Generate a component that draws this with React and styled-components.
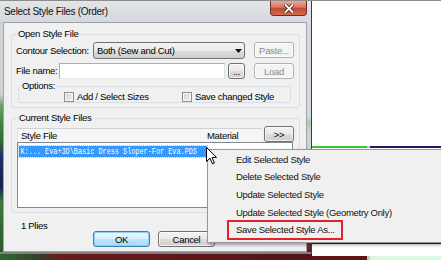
import React from "react";
import styled, { createGlobalStyle } from "styled-components";

const GlobalStyle = createGlobalStyle`
  html, body { margin: 0; padding: 0; background: #fff; overflow: hidden; }
  body { font-family: "Liberation Sans", Arial, sans-serif; }
`;

const Screen = styled.div`
  position: relative;
  width: 441px;
  height: 260px;
  box-sizing: border-box;
  border-top: 1px solid #8d8d8d;
  display: flex;
  overflow: hidden;
  font-family: "Liberation Sans", Arial, sans-serif;
  font-size: 9.5px;
  letter-spacing: -0.3px;
  color: #000;
`;

const LeftColumn = styled.div`
  width: 312px;
  display: flex;
  flex-direction: column;
`;

const Dialog = styled.div`
  height: 253px;
  display: flex;
  flex-direction: column;
  border-right: 1px solid #3d3d3d;
  background: #d6d9dd;
`;

const TitleBar = styled.div`
  height: 21px;
  flex: none;
  display: flex;
  align-items: flex-start;
  justify-content: space-between;
  background: linear-gradient(#e3e5e8, #d5d8dc);
`;

const TitleText = styled.div`
  padding: 5px 0 0 4px;
  font-size: 10px;
  line-height: 12px;
  color: #111;
`;

const CloseButton = styled.div`
  width: 37px;
  height: 15px;
  margin-right: 4px;
  box-sizing: border-box;
  display: flex;
  align-items: center;
  justify-content: center;
  border: 1px solid #6b2f29;
  border-top: none;
  border-radius: 0 0 4px 4px;
  background: linear-gradient(#e8a99b, #d87562 45%, #c24a33 52%, #d06b50);
`;

const Body = styled.div`
  height: 230px;
  display: flex;
`;

const FrameSide = styled.div`
  width: ${(p) => p.$w}px;
  flex: none;
  background: ${(p) => p.$bg};
`;

const BottomFrame = styled.div`
  height: 2px;
  background: #7d8186;
`;

const Client = styled.div`
  width: 304px;
  box-sizing: border-box;
  border: 1px solid #9ea4aa;
  background: #f0f0f0;
  display: flex;
  flex-direction: column;
`;

const DesktopStrip = styled.div`
  flex: 1;
  background: linear-gradient(90deg, #2e6b2e 0, #3b3b2a 40px, #6a1a1a 60px, #521414 100%);
`;

const Group = styled.fieldset`
  box-sizing: border-box;
  width: ${(p) => p.$w}px;
  margin: ${(p) => p.$m};
  padding: ${(p) => p.$pad};
  border: 1px solid #d5dfe5;
  border-radius: 3px;
  min-width: 0;
`;

const Legend = styled.legend`
  padding: 0 2px;
  line-height: 12px;
  font-size: 9.5px;
`;

const Row = styled.div`
  display: flex;
  align-items: flex-start;
  height: ${(p) => p.$h}px;
  margin-top: ${(p) => p.$mt || 0}px;
`;

const Label = styled.div`
  width: ${(p) => p.$w}px;
  flex: none;
  line-height: ${(p) => p.$lh || 17}px;
`;

const ComboBox = styled.div`
  width: 152px;
  height: 17px;
  box-sizing: border-box;
  display: flex;
  align-items: center;
  justify-content: space-between;
  padding: 0 2px 0 3px;
  border: 1px solid #707070;
  border-radius: 3px;
  background: linear-gradient(#f2f2f2 0%, #ebebeb 50%, #dddddd 51%, #cfcfcf 100%);
`;

const PushButton = styled.div`
  width: ${(p) => p.$w}px;
  height: 16px;
  margin-left: ${(p) => p.$ml || 0}px;
  flex: none;
  box-sizing: border-box;
  display: flex;
  align-items: center;
  justify-content: center;
  border-radius: 3px;
  border: 1px solid ${(p) => (p.$kind === "off" ? "#adb2b5" : p.$kind === "default" ? "#3c7fb1" : "#707070")};
  color: ${(p) => (p.$kind === "off" ? "#8a8a8a" : "#000")};
  background: ${(p) =>
    p.$kind === "off"
      ? "#f4f4f4"
      : p.$kind === "default"
      ? "linear-gradient(#eaf6fd 0%, #d9f0fc 50%, #bee6fd 51%, #a7d9f5 100%)"
      : "linear-gradient(#f2f2f2 0%, #ebebeb 50%, #dddddd 51%, #cfcfcf 100%)"};
  box-shadow: ${(p) => (p.$kind === "default" ? "inset 0 0 0 1px #8fd0f5" : "inset 0 0 0 1px rgba(255,255,255,0.7)")};
`;

const TextBox = styled.div`
  width: 166px;
  height: 16px;
  box-sizing: border-box;
  border: 1px solid #abadb3;
  border-bottom-color: #e3e9ef;
  border-right-color: #dbdfe6;
  background: #fff;
`;

const OptionsRow = styled.div`
  display: grid;
  grid-template-columns: 118px auto;
  align-items: center;
  height: 10px;
  padding-left: 44px;
`;

const CheckOption = styled.div`
  display: flex;
  align-items: center;
  gap: 3px;
  line-height: 10px;
`;

const CheckBox = styled.span`
  width: 10px;
  height: 10px;
  box-sizing: border-box;
  border: 1px solid #8e8f8f;
  background: linear-gradient(135deg, #cfcfcf, #f4f4f4);
  box-shadow: inset 0 0 0 1px #f5f5f5;
`;

const TopRow = styled.div`
  display: flex;
  align-items: flex-end;
  height: 16px;
`;

const HeaderBar = styled.div`
  width: 245px;
  height: 14px;
  box-sizing: border-box;
  display: flex;
  align-items: center;
  padding-left: 3px;
  border-top: 1px solid #cfd3d6;
  border-left: 1px solid #dfe3e6;
  background: #f6f6f6;
`;

const HeaderCell = styled.div`
  width: ${(p) => p.$w || "auto"};
  flex: none;
`;

const ListBox = styled.div`
  width: 276px;
  height: 66px;
  box-sizing: border-box;
  border: 1px solid #828790;
  background: #fff;
  padding: 3px 1px;
`;

const SelectedRow = styled.div`
  width: 188px;
  height: 11px;
  box-sizing: border-box;
  display: flex;
  align-items: center;
  background: #3399ff;
  outline: 1px dotted #f2b56a;
  color: #fff;
  overflow: visible;
`;

const MonoText = styled.span`
  display: inline-block;
  padding-left: 2px;
  font-family: "Liberation Mono", "Courier New", monospace;
  font-size: 9.5px;
  letter-spacing: 0;
  line-height: 11px;
  white-space: nowrap;
  transform: scaleX(0.72);
  transform-origin: left center;
`;

const Footer = styled.div`
  padding-left: 17px;
`;

const Plies = styled.div`
  margin-top: 7px;
  line-height: 11px;
`;

const ButtonRow = styled.div`
  display: flex;
  gap: 8px;
  padding-left: 72px;
`;

const Backdrop = styled.div`
  flex: 1;
  display: flex;
  flex-direction: column;
  background: #fff;
`;

const Strip = styled.div`
  height: ${(p) => p.$h}px;
  flex: none;
  display: flex;
  background: ${(p) => p.$bg || "#fff"};
`;

const Segment = styled.div`
  width: ${(p) => (p.$w ? `${p.$w}px` : "auto")};
  flex: ${(p) => (p.$w ? "none" : 1)};
  background: ${(p) => p.$bg};
`;

const ContextMenu = styled.div`
  position: absolute;
  left: 207px;
  top: 148px;
  width: 250px;
  height: 94px;
  box-sizing: border-box;
  padding-top: 1px;
  border: 1px solid #979797;
  background: #f0f0f0;
  box-shadow: 2px 2px 3px rgba(0, 0, 0, 0.35);
`;

const MenuItem = styled.div`
  height: 17.6px;
  display: flex;
  align-items: center;
  padding-left: 28px;
  color: #111;
`;

const MenuLabel = styled.span`
  line-height: 16px;
  ${(p) =>
    p.$marked &&
    `
    border: 2px solid #e4222a;
    padding: 0 6px 0 7px;
    margin-left: -9px;
  `}
`;

const Pointer = styled.svg`
  position: absolute;
  left: 206px;
  top: 146px;
`;

const menuItems = [
  "Edit Selected Style",
  "Delete Selected Style",
  "Update Selected Style",
  "Update Selected Style (Geometry Only)",
  "Save Selected Style As...",
];

const leftFrame =
  "linear-gradient(#cfd3d6 0, #cfd3d6 72px, #6f9c6a 84px, #3f8a3f 100px, #2f6a33 120px, #1e2c6c 135px, #172050 165px, #3d7a3a 180px, #2b5a2b 230px)";
const rightFrame =
  "linear-gradient(#d5d8dc 0, #d5d8dc 95px, #a6cfa0 100px, #d0d4d8 110px, #c8ccd0 205px, #7a3030 222px, #5a1a1a 230px)";

export default function App() {
  return (
    <>
      <GlobalStyle />
      <Screen>
        <LeftColumn>
          <Dialog>
            <TitleBar>
              <TitleText>Select Style Files (Order)</TitleText>
              <CloseButton>
                <svg width="10" height="9" viewBox="0 0 10 9">
                  <path d="M1.5 1 L8.5 8 M8.5 1 L1.5 8" stroke="#4a1e18" strokeWidth="3.4" strokeLinecap="square" />
                  <path d="M1.5 1 L8.5 8 M8.5 1 L1.5 8" stroke="#fff" strokeWidth="1.8" strokeLinecap="square" />
                </svg>
              </CloseButton>
            </TitleBar>
            <Body>
              <FrameSide $w={3} $bg={leftFrame} />
              <Client>
                <Group $w={289} $m="5px 0 0 7px" $pad="2px 4px 4px 4px">
                  <Legend>Open Style File</Legend>
                  <Row $h={17}>
                    <Label $w={77}>Contour Selection:</Label>
                    <ComboBox>
                      <span>Both (Sew and Cut)</span>
                      <svg width="7" height="4" viewBox="0 0 7 4">
                        <path d="M0 0 H7 L3.5 4 Z" fill="#111" />
                      </svg>
                    </ComboBox>
                    <PushButton $w={40} $ml={9} $kind="off">Paste...</PushButton>
                  </Row>
                  <Row $h={16} $mt={4}>
                    <Label $w={43} $lh={16}>File name:</Label>
                    <TextBox />
                    <PushButton $w={17} $ml={3}>...</PushButton>
                    <PushButton $w={40} $ml={9} $kind="off">Load</PushButton>
                  </Row>
                  <Group $w={273} $m="1px 0 0 2px" $pad="0 0 0 1px">
                    <Legend>Options:</Legend>
                    <OptionsRow>
                      <CheckOption>
                        <CheckBox />
                        Add / Select Sizes
                      </CheckOption>
                      <CheckOption>
                        <CheckBox />
                        Save changed Style
                      </CheckOption>
                    </OptionsRow>
                  </Group>
                </Group>

                <Group $w={289} $m="4px 0 0 7px" $pad="2px 5px 4px 5px">
                  <Legend>Current Style Files</Legend>
                  <TopRow>
                    <HeaderBar>
                      <HeaderCell $w="186px">Style File</HeaderCell>
                      <HeaderCell>Material</HeaderCell>
                    </HeaderBar>
                    <PushButton $w={30} $ml={2}>&gt;&gt;</PushButton>
                  </TopRow>
                  <ListBox>
                    <SelectedRow>
                      <MonoText>K:... Eva+3D\Basic Dress Sloper-For Eva.PDS</MonoText>
                    </SelectedRow>
                  </ListBox>
                </Group>

                <Footer>
                  <Plies>1 Plies</Plies>
                  <ButtonRow>
                    <PushButton $w={57} $kind="default">OK</PushButton>
                    <PushButton $w={57}>Cancel</PushButton>
                  </ButtonRow>
                </Footer>
              </Client>
              <FrameSide $w={4} $bg={rightFrame} />
            </Body>
            <BottomFrame />
          </Dialog>
          <DesktopStrip />
        </LeftColumn>

        <Backdrop>
          <Strip $h={145} />
          <Strip $h={2}>
            <Segment $w={55} $bg="#3cc43c" />
            <Segment $w={3} $bg="#c9c9c9" />
            <Segment $bg="#1c1c6a" />
          </Strip>
          <Strip $h={94} />
          <Strip $h={2} $bg="#5e1212" />
          <Strip $h={12} />
          <Strip $h={4}>
            <Segment $w={55} $bg="#5e1414" />
            <Segment $w={3} $bg="#c9c9c9" />
            <Segment $bg="#dcf8e2" />
          </Strip>
        </Backdrop>

        <ContextMenu>
          {menuItems.map((item, i) => (
            <MenuItem key={item}>
              <MenuLabel $marked={i === menuItems.length - 1}>{item}</MenuLabel>
            </MenuItem>
          ))}
        </ContextMenu>

        <Pointer width="11" height="18" viewBox="0 0 11 18">
          <path d="M0.5 0.5 V14.5 L4 11.2 L6.4 16.8 L8.4 16 L6 10.4 H10.5 Z" fill="#fff" stroke="#000" strokeWidth="1" strokeLinejoin="round" />
        </Pointer>
      </Screen>
    </>
  );
}
